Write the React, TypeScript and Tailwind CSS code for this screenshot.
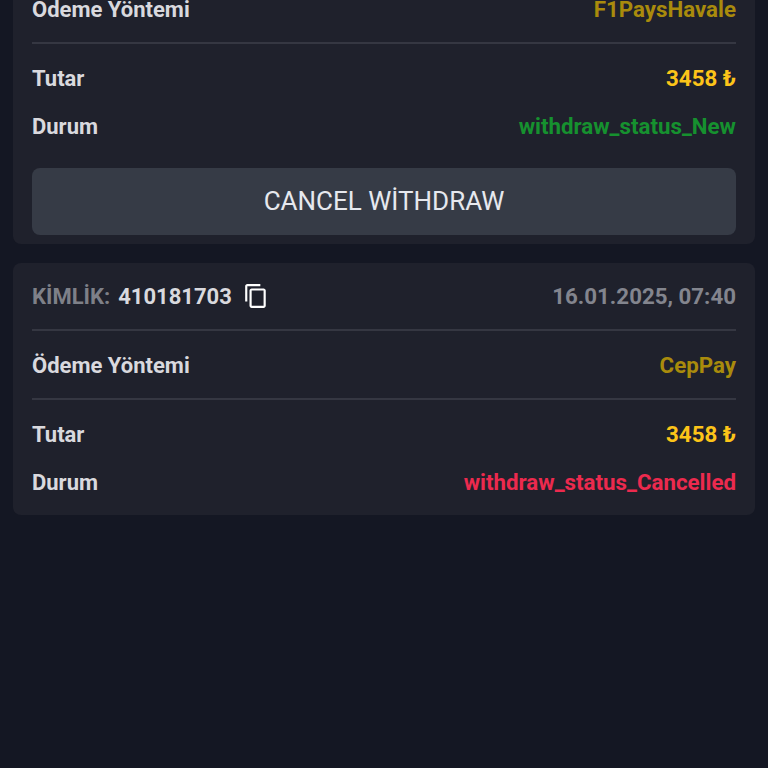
import { MdContentCopy } from "react-icons/md";

type Withdraw = {
  id?: string;
  date?: string;
  method: string;
  amount: string;
  status: string;
  statusColor: string;
  cancellable?: boolean;
};

const withdrawals: Withdraw[] = [
  {
    method: "F1PaysHavale",
    amount: "3458 ₺",
    status: "withdraw_status_New",
    statusColor: "text-[#16912f]",
    cancellable: true,
  },
  {
    id: "410181703",
    date: "16.01.2025, 07:40",
    method: "CepPay",
    amount: "3458 ₺",
    status: "withdraw_status_Cancelled",
    statusColor: "text-[#ec2a4e]",
  },
];

const WithdrawCard = ({ item }: { item: Withdraw }) => (
  <div className="rounded-lg bg-[#1f212c] px-[19px] text-[22px] leading-[33px] font-bold">
    {item.id && (
      <div className="flex h-[68px] items-center justify-between border-b-2 border-[#353742]">
        <div className="flex items-center">
          <span className="text-[#7e8088]">KİMLİK:</span>
          <span className="ml-2 text-[#d9d9de]">{item.id}</span>
          <MdContentCopy className="ml-[11px] text-[26px] text-white" />
        </div>
        <span className="text-[22.3px] text-[#83858e]">{item.date}</span>
      </div>
    )}
    <div className="flex h-[69px] items-center justify-between border-b-2 border-[#353742] pt-[1px]">
      <span className="text-[#d9d9de]">Ödeme Yöntemi</span>
      <span className="text-[22.3px] text-[#a98b0c]">{item.method}</span>
    </div>
    <div className="flex h-[68px] items-center justify-between">
      <span className="text-[#d9d9de]">Tutar</span>
      <span className="text-[22.3px] text-[#fcc419]">{item.amount}</span>
    </div>
    <div className="flex h-[28px] items-center justify-between">
      <span className="text-[#d9d9de]">Durum</span>
      <span className={`text-[22.3px] ${item.statusColor}`}>{item.status}</span>
    </div>
    {item.cancellable ? (
      <div className="pt-[28px] pb-[9px]">
        <button className="flex h-[67px] w-full items-center justify-center rounded-lg bg-[#363b46] text-[26px] font-normal text-[#e6e8ee]">
          CANCEL WİTHDRAW
        </button>
      </div>
    ) : (
      <div className="h-[19px]" />
    )}
  </div>
);

const App = () => {
  return (
    <div className="h-screen overflow-hidden bg-[#141723] font-['Roboto',sans-serif]">
      <div className="mx-[13px] mt-[-25px] flex flex-col gap-[19px]">
        {withdrawals.map((item) => (
          <WithdrawCard key={item.status} item={item} />
        ))}
      </div>
    </div>
  );
};

export default App;
